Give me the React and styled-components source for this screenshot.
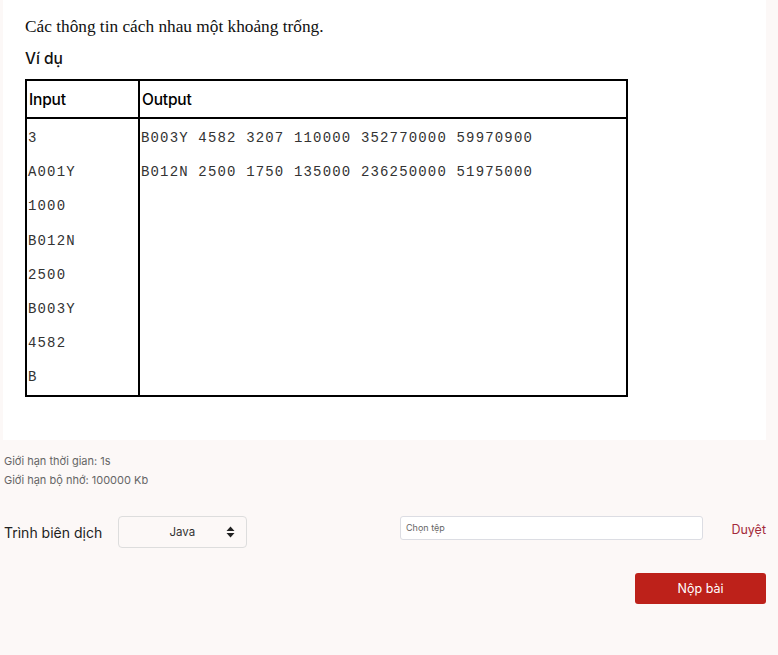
import React from "react";
import styled, { createGlobalStyle } from "styled-components";

const GlobalStyle = createGlobalStyle`
  body {
    margin: 0;
    background: #fcf8f7;
    font-family: "Inter", "Liberation Sans", sans-serif;
  }
`;

const PAGE = styled.div`
  width: 778px;
  height: 655px;
  box-sizing: border-box;
`;
const PANEL = styled.div`
  margin-left: 3px;
  width: 763px;
  height: 440px;
  box-sizing: border-box;
  background: #fff;
  padding: 17px 0 0 22px;
`;
const INTRO = styled.p`
  margin: 0;
  font-family: "Liberation Serif", serif;
  font-size: 17.3px;
  line-height: 19px;
  color: #111;
`;
const HEADING = styled.h4`
  margin: 13px 0 10px;
  font-size: 15.5px;
  line-height: 20px;
  font-weight: 500;
  color: #111;
`;
const TABLE = styled.table`
  border-collapse: collapse;
  width: 603px;
  border: 2px solid #000;
  td,
  th {
    border: 2px solid #000;
    vertical-align: top;
    text-align: left;
  }
`;
const TH = styled.th`
  width: ${(p) => p.$w || "auto"};
  height: 36px;
  padding: 0 0 0 2px;
  font-size: 15.5px;
  font-weight: 500;
  letter-spacing: -0.2px;
  vertical-align: middle !important;
  color: #000;
`;
const CELL = styled.td`
  padding: 2px 0 0 1px;
`;
const LINE = styled.div`
  font-family: "Courier New", "Liberation Mono", monospace;
  font-size: 14px;
  letter-spacing: 1.16px;
  line-height: 34.2px;
  height: 34.2px;
  white-space: pre;
  color: #333;
`;
const INFO = styled.div`
  margin: 12px 0 0 4px;
  font-size: 11px;
  line-height: 19px;
  color: #666;
`;
const ROW = styled.div`
  display: flex;
  align-items: flex-start;
  margin: 26px 12px 0 4px;
`;
const LEFT = styled.div`
  flex: 1;
  display: flex;
  align-items: center;
  gap: 16px;
`;
const LABEL = styled.span`
  font-size: 14px;
  color: #222;
`;
const SELECT = styled.div`
  width: 129px;
  height: 32px;
  box-sizing: border-box;
  border: 1px solid #ddd;
  border-radius: 4px;
  background: #fcf8f7;
  display: flex;
  align-items: center;
  justify-content: flex-end;
  padding-right: 11px;
  gap: 31px;
  font-size: 11.5px;
  color: #333;
`;
const RIGHT = styled.div`
  width: 366px;
  display: flex;
  align-items: flex-start;
  justify-content: space-between;
`;
const FILE = styled.div`
  width: 303px;
  height: 24px;
  box-sizing: border-box;
  border: 1px solid #dcdde3;
  border-radius: 3px;
  background: #fff;
  padding-left: 5px;
  font-size: 9px;
  line-height: 22px;
  color: #666;
`;
const BROWSE = styled.span`
  margin-top: 6px;
  font-size: 12.5px;
  color: #a32a3a;
`;
const ACTIONS = styled.div`
  display: flex;
  justify-content: flex-end;
  margin: 25px 12px 0 0;
`;
const SUBMIT = styled.button`
  width: 131px;
  height: 31px;
  border: none;
  border-radius: 3px;
  background: #bd211a;
  color: #fff;
  font-family: inherit;
  font-size: 12.5px;
`;

const input = ["3", "A001Y", "1000", "B012N", "2500", "B003Y", "4582", "B"];
const output = [
  "B003Y 4582 3207 110000 352770000 59970900",
  "B012N 2500 1750 135000 236250000 51975000",
];

const SortIcon = () => (
  <svg width="9" height="12" viewBox="0 0 9 12">
    <path d="M4.5 0.5 L8.5 5 H0.5 Z M4.5 11.5 L8.5 7 H0.5 Z" fill="#222" />
  </svg>
);

const App = () => {
  return (
    <PAGE>
      <GlobalStyle />
      <PANEL>
        <INTRO>Các thông tin cách nhau một khoảng trống.</INTRO>
        <HEADING>Ví dụ</HEADING>
        <TABLE>
          <thead>
            <tr>
              <TH $w="109px">Input</TH>
              <TH>Output</TH>
            </tr>
          </thead>
          <tbody>
            <tr>
              <CELL>
                {input.map((l, i) => (
                  <LINE key={i}>{l}</LINE>
                ))}
              </CELL>
              <CELL>
                {output.map((l, i) => (
                  <LINE key={i}>{l}</LINE>
                ))}
              </CELL>
            </tr>
          </tbody>
        </TABLE>
      </PANEL>
      <INFO>
        <div>Giới hạn thời gian: 1s</div>
        <div>Giới hạn bộ nhớ: 100000 Kb</div>
      </INFO>
      <ROW>
        <LEFT>
          <LABEL>Trình biên dịch</LABEL>
          <SELECT>
            <span>Java</span>
            <SortIcon />
          </SELECT>
        </LEFT>
        <RIGHT>
          <FILE>Chọn tệp</FILE>
          <BROWSE>Duyệt</BROWSE>
        </RIGHT>
      </ROW>
      <ACTIONS>
        <SUBMIT>Nộp bài</SUBMIT>
      </ACTIONS>
    </PAGE>
  );
};

export default App;
